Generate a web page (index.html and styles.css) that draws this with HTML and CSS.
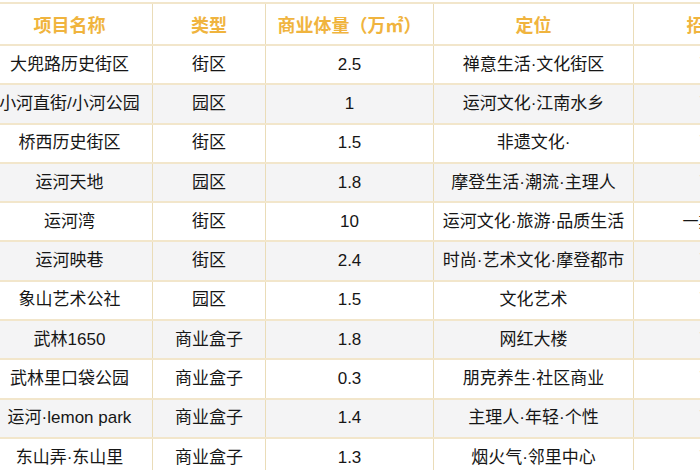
FILE: index.html
```html
<!DOCTYPE html>
<html lang="zh">
<head>
<meta charset="utf-8">
<link rel="stylesheet" href="styles.css">
</head>
<body>
<div class="frame">
<table class="grid">
  <colgroup>
    <col class="c1"><col class="c2"><col class="c3"><col class="c4"><col class="c5">
  </colgroup>
  <thead>
    <tr><th>项目名称</th><th>类型</th><th>商业体量（万㎡）</th><th>定位</th><th>招商进度</th></tr>
  </thead>
  <tbody>
    <tr><td>大兜路历史街区</td><td>街区</td><td>2.5</td><td>禅意生活·文化街区</td><td class="last pale">已开业</td></tr>
    <tr><td>小河直街/小河公园</td><td>园区</td><td>1</td><td>运河文化·江南水乡</td><td class="last pale">已开业</td></tr>
    <tr><td>桥西历史街区</td><td>街区</td><td>1.5</td><td>非遗文化·</td><td class="last pale">已开业</td></tr>
    <tr><td>运河天地</td><td>园区</td><td>1.8</td><td>摩登生活·潮流·主理人</td><td class="last pale">已开业</td></tr>
    <tr><td>运河湾</td><td>街区</td><td>10</td><td>运河文化·旅游·品质生活</td><td class="last">一期已开业</td></tr>
    <tr><td>运河映巷</td><td>街区</td><td>2.4</td><td>时尚·艺术文化·摩登都市</td><td class="last pale">已开业</td></tr>
    <tr><td>象山艺术公社</td><td>园区</td><td>1.5</td><td>文化艺术</td><td class="last pale">已开业</td></tr>
    <tr><td>武林1650</td><td>商业盒子</td><td>1.8</td><td>网红大楼</td><td class="last pale">已开业</td></tr>
    <tr><td>武林里口袋公园</td><td>商业盒子</td><td>0.3</td><td>朋克养生·社区商业</td><td class="last pale">已开业</td></tr>
    <tr><td>运河·lemon park</td><td>商业盒子</td><td>1.4</td><td>主理人·年轻·个性</td><td class="last pale">已开业</td></tr>
    <tr><td>东山弄·东山里</td><td>商业盒子</td><td>1.3</td><td>烟火气·邻里中心</td><td class="last pale">已开业</td></tr>
  </tbody>
</table>
</div>
</body>
</html>
```

FILE: styles.css
```css
html, body {
  margin: 0;
  padding: 0;
  background: #ffffff;
}
.frame {
  width: 700px;
  height: 470px;
  overflow: hidden;
  padding-top: 2px;
  box-sizing: border-box;
}
.grid {
  margin-left: -14px;
  border-collapse: collapse;
  table-layout: fixed;
  width: 825px;
  font-family: "Liberation Sans", "Noto Sans CJK SC", sans-serif;
  color: #161616;
}
.c1 { width: 166px; }
.c2 { width: 113px; }
.c3 { width: 168px; }
.c4 { width: 200px; }
.c5 { width: 178px; }
.grid th,
.grid td {
  text-align: center;
  vertical-align: middle;
  border-top: 2px solid #f2e6cb;
  border-bottom: 2px solid #f2e6cb;
  border-left: 1px solid #eadcb8;
  border-right: 1px solid #eadcb8;
  padding: 0;
  white-space: nowrap;
  overflow: hidden;
}
.grid th {
  height: 40px;
  font-size: 18px;
  font-weight: 700;
  color: #f0b43e;
  background: #ffffff;
}
.grid td {
  height: 37.3px;
  font-size: 17px;
  line-height: 20px;
}
.grid tbody tr:nth-child(even) td {
  background: #f4f4f5;
}
.grid td.last {
  font-size: 16px;
}
.grid td.pale {
  color: #a8a8a8;
}
```
